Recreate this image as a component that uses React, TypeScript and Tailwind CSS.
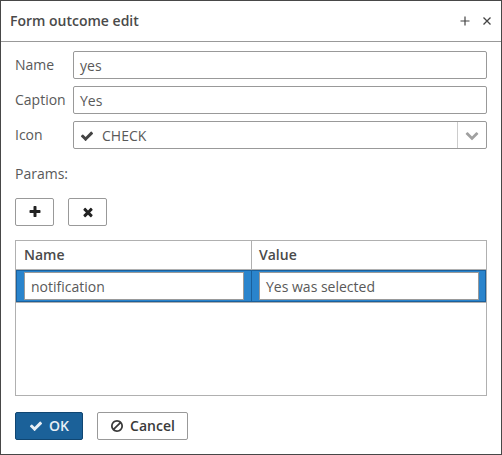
import type { ReactNode } from "react";

const icons = {
  check:
    "M1671 566q0 40-28 68l-724 724-136 136q-28 28-68 28t-68-28l-136-136-362-362q-28-28-28-68t28-68l136-136q28-28 68-28t68 28l294 295 656-657q28-28 68-28t68 28l136 136q28 28 28 68z",
  plus: "M1600 736v192q0 40-28 68t-68 28h-416v416q0 40-28 68t-68 28h-192q-40 0-68-28t-28-68v-416h-416q-40 0-68-28t-28-68v-192q0-40 28-68t68-28h416v-416q0-40 28-68t68-28h192q40 0 68 28t28 68v416h416q40 0 68 28t28 68z",
  times:
    "M1490 1322q0 40-28 68l-136 136q-28 28-68 28t-68-28l-294-294-294 294q-28 28-68 28t-68-28l-136-136q-28-28-28-68t28-68l294-294-294-294q-28-28-28-68t28-68l136-136q28-28 68-28t68 28l294 294 294-294q28-28 68-28t68 28l136 136q28 28 28 68t-28 68l-294 294 294 294q28 28 28 68z",
  ban: "M1440 893q0-161-87-295l-754 753q137 89 297 89 111 0 211.500-43.500t173.500-116.500 116-174.500 43-212.500zm-999 299l755-754q-135-91-300-91-148 0-273 73t-198 199-73 274q0 162 89 299zm1223-299q0 157-61 300t-163.500 246-245 164-298.500 61-298.500-61-245-164-163.500-246-61-300 61-299.500 163.500-245.500 245-164 298.500-61 298.500 61 245 164 163.500 245.500 61 299.500z",
  chevron:
    "M1683 808l-742 741q-19 19-45 19t-45-19l-742-741q-19-19-19-45.500t19-45.500l166-165q19-19 45-19t45 19l531 531 531-531q19-19 45-19t45 19l166 165q19 19 19 45.500t-19 45.500z",
};

function Icon({ name, className = "" }: { name: keyof typeof icons; className?: string }) {
  return (
    <svg viewBox="0 0 1792 1792" fill="currentColor" className={`size-3.5 shrink-0 ${className}`}>
      <path d={icons[name]} />
    </svg>
  );
}

function Field({ label, children }: { label: string; children: ReactNode }) {
  return (
    <div className="flex h-7">
      <span className="w-[58px] shrink-0 leading-7">{label}</span>
      <div className="flex flex-1 rounded-[2px] border border-[#999] pl-1.5 leading-7">{children}</div>
    </div>
  );
}

function Button({ className, children }: { className: string; children: ReactNode }) {
  return (
    <button className={`flex h-7 items-center justify-center rounded-[2px] border ${className}`}>
      {children}
    </button>
  );
}

export default function App() {
  return (
    <div className="flex h-[455px] w-[502px] flex-col border border-[#474747] bg-white font-['Open_Sans',sans-serif] text-sm text-[#595959]">
      <header className="flex h-[41px] shrink-0 items-center border-b border-[#999] pr-[9px] pl-[9px] font-semibold text-[#4a4a4a]">
        <h1 className="flex-1">Form outcome edit</h1>
        <svg viewBox="0 0 10 10" className="mr-3 size-2.5" stroke="#444" strokeWidth="1.2">
          <path d="M5 .5v9M.5 5h9" />
        </svg>
        <svg viewBox="0 0 10 10" className="size-2.5" stroke="#444" strokeWidth="1.3">
          <path d="M1.500 1.500l7 7M8.500 1.500l-7 7" />
        </svg>
      </header>

      <main className="flex flex-col px-3.5 pt-[9px]">
        <div className="flex flex-col gap-[7px]">
          <Field label="Name">yes</Field>
          <Field label="Caption">Yes</Field>
          <Field label="Icon">
            <Icon name="check" className="mt-[7px] mr-2 text-[#444]" />
            <span className="flex-1">CHECK</span>
            <span className="flex w-[29px] items-center justify-center border-l border-[#ccc] text-[#a0a0a0]">
              <Icon name="chevron" />
            </span>
          </Field>
        </div>

        <p className="mt-[11px] h-7 leading-7">Params:</p>

        <div className="mt-2.5 flex gap-3.5">
          <Button className="w-[39px] border-[#999] text-[#222]"><Icon name="plus" /></Button>
          <Button className="w-[39px] border-[#999] text-[#222]"><Icon name="times" /></Button>
        </div>

        <section className="mt-3.5 h-[156px] border border-[#b0b0b0]">
          <div className="flex h-[29px] border-b border-[#b0b0b0] font-semibold leading-7 text-[#4a4a4a]">
            <span className="w-[236px] border-r border-[#b0b0b0] pl-2">Name</span>
            <span className="pl-[7px]">Value</span>
          </div>
          <div className="flex h-8 border border-[#1a609c] bg-[#2a84cc] leading-7">
            <div className="flex w-[235px] border-r border-[#1a609c] py-px pr-[7px] pl-[7px]">
              <span className="flex-1 border border-[#999] bg-white pl-1.5 leading-7">notification</span>
            </div>
            <div className="flex flex-1 py-px pr-1.5 pl-[7px]">
              <span className="flex-1 border border-[#999] bg-white pl-1.5 leading-7">Yes was selected</span>
            </div>
          </div>
          <div className="border-t border-[#b0b0b0]" />
        </section>

        <footer className="mt-4 flex gap-3.5 font-semibold">
          <Button className="w-[68px] gap-1.5 border-[#104672] bg-[#1b6199] text-[#e8eff5]">
            <Icon name="check" />
            OK
          </Button>
          <Button className="w-[91px] gap-1.5 border-[#999] text-[#3a3a3a]">
            <Icon name="ban" />
            Cancel
          </Button>
        </footer>
      </main>
    </div>
  );
}
